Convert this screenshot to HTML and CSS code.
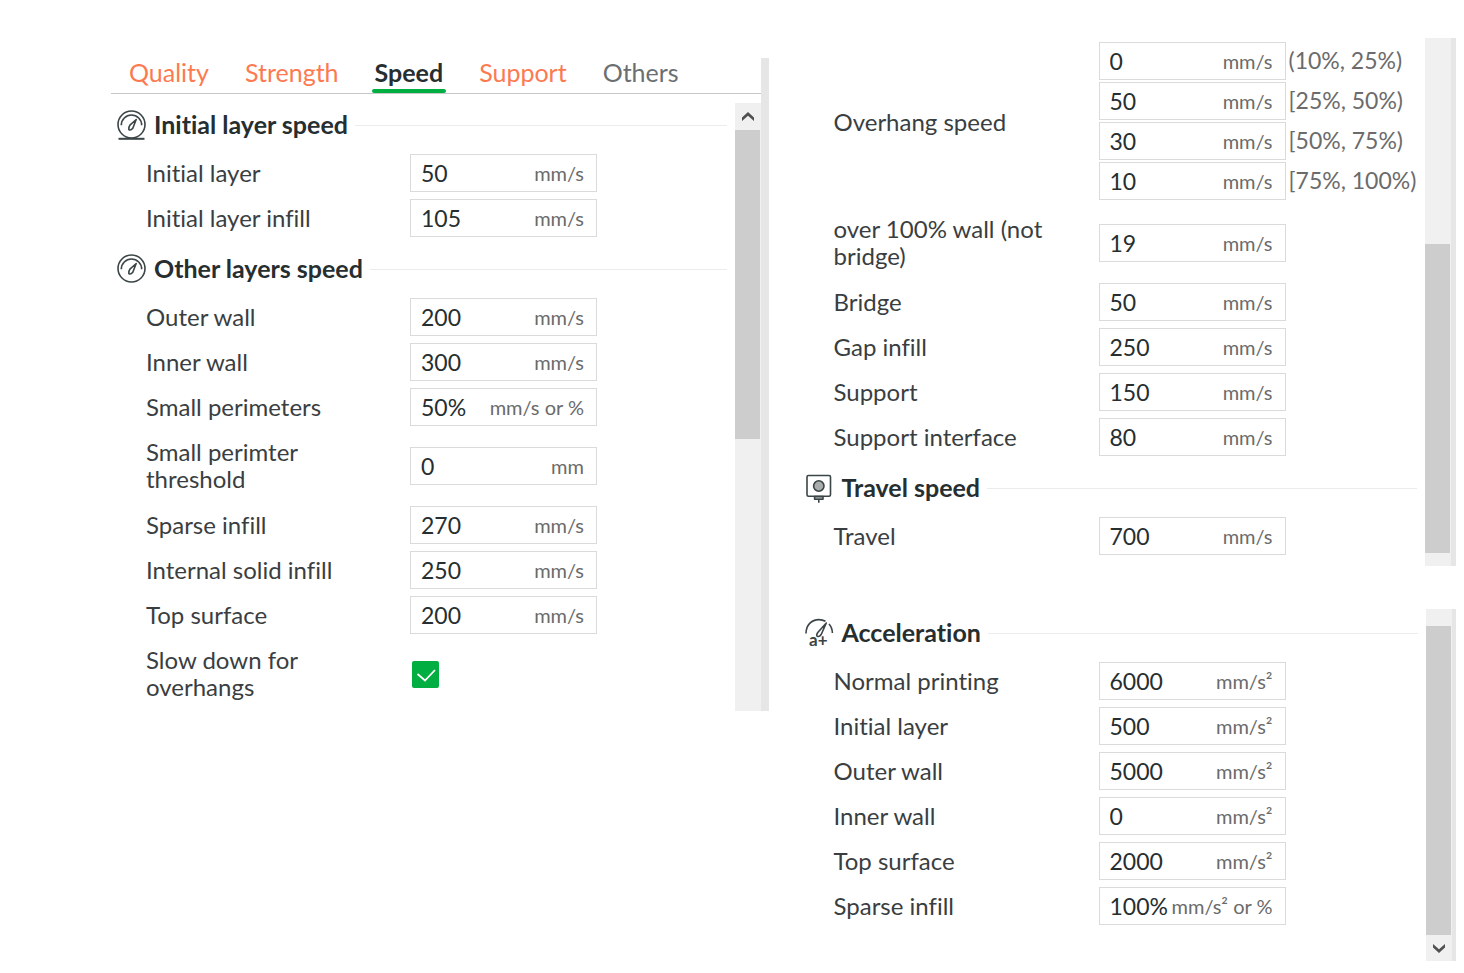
FILE: index.html
```html
<!DOCTYPE html>
<html lang="en">
<head>
<meta charset="utf-8">
<title>Speed settings</title>
<link rel="stylesheet" href="styles.css">
</head>
<body>
<svg class="defs" aria-hidden="true">
  <symbol id="dial" viewBox="0 0 30 30">
    <circle cx="14.500" cy="14.500" r="13.500"/>
    <path d="M4.300 15.200A10.200 10.200 0 0 1 24.700 15.200"/>
    <path d="M19.200 9.500L13.200 14.800Q11.200 17.500 11.800 19.600Q13.800 20.800 15.800 18.200Z"/>
  </symbol>
</svg>
<main class="page">
  <section class="panel panel-first">
    <nav class="tabs">
      <button class="tab changed" type="button">Quality</button>
      <button class="tab changed" type="button">Strength</button>
      <button class="tab active" type="button">Speed</button>
      <button class="tab changed" type="button">Support</button>
      <button class="tab" type="button">Others</button>
    </nav>
    <div class="body">
      <div class="content">
        <h2 class="heading">
          <svg class="icon" viewBox="0 0 30 30" aria-hidden="true"><use href="#dial"/><path d="M1.500 28.800H27.500" class="thick"/></svg>
          <span>Initial layer speed</span>
        </h2>
        <div class="rows">
          <div class="row"><label for="a1">Initial layer</label><div class="field"><input id="a1" value="50"><span>mm/s</span></div></div>
          <div class="row"><label for="a2">Initial layer infill</label><div class="field"><input id="a2" value="105"><span>mm/s</span></div></div>
        </div>
        <h2 class="heading">
          <svg class="icon" viewBox="0 0 30 30" aria-hidden="true"><use href="#dial"/></svg>
          <span>Other layers speed</span>
        </h2>
        <div class="rows">
          <div class="row"><label for="b1">Outer wall</label><div class="field"><input id="b1" value="200"><span>mm/s</span></div></div>
          <div class="row"><label for="b2">Inner wall</label><div class="field"><input id="b2" value="300"><span>mm/s</span></div></div>
          <div class="row"><label for="b3">Small perimeters</label><div class="field"><input id="b3" value="50%"><span>mm/s or %</span></div></div>
          <div class="row tall"><label for="b4">Small perimter threshold</label><div class="field"><input id="b4" value="0"><span>mm</span></div></div>
          <div class="row"><label for="b5">Sparse infill</label><div class="field"><input id="b5" value="270"><span>mm/s</span></div></div>
          <div class="row"><label for="b6">Internal solid infill</label><div class="field"><input id="b6" value="250"><span>mm/s</span></div></div>
          <div class="row"><label for="b7">Top surface</label><div class="field"><input id="b7" value="200"><span>mm/s</span></div></div>
          <div class="row tall"><label for="b8">Slow down for overhangs</label>
            <div class="check"><input id="b8" type="checkbox" checked><svg viewBox="0 0 27 27" aria-hidden="true"><path d="M5.500 13L13 19.500L23 9"/></svg></div></div>
        </div>
      </div>
      <div class="scroll">
        <button class="arrow" type="button" aria-label="Scroll up"><svg viewBox="0 0 12 9" aria-hidden="true"><path d="M0 9V5.500L6 0L12 5.500V9L6 3.800Z"/></svg></button>
        <div class="thumb"></div>
      </div>
    </div>
  </section>

  <div class="stack">
    <section class="panel panel-second">
      <div class="body">
        <div class="content">
          <div class="rows">
            <div class="row">
              <label for="c1">Overhang speed</label>
              <div class="group">
                <div class="line"><div class="field"><input id="c1" value="0"><span>mm/s</span></div><label class="note" for="c1">(10%, 25%)</label></div>
                <div class="line"><div class="field"><input id="c2" value="50"><span>mm/s</span></div><label class="note" for="c2">[25%, 50%)</label></div>
                <div class="line"><div class="field"><input id="c3" value="30"><span>mm/s</span></div><label class="note" for="c3">[50%, 75%)</label></div>
                <div class="line"><div class="field"><input id="c4" value="10"><span>mm/s</span></div><label class="note" for="c4">[75%, 100%)</label></div>
              </div>
            </div>
            <div class="row tall"><label for="c5">over 100% wall (not bridge)</label><div class="field"><input id="c5" value="19"><span>mm/s</span></div></div>
            <div class="row"><label for="c6">Bridge</label><div class="field"><input id="c6" value="50"><span>mm/s</span></div></div>
            <div class="row"><label for="c7">Gap infill</label><div class="field"><input id="c7" value="250"><span>mm/s</span></div></div>
            <div class="row"><label for="c8">Support</label><div class="field"><input id="c8" value="150"><span>mm/s</span></div></div>
            <div class="row"><label for="c9">Support interface</label><div class="field"><input id="c9" value="80"><span>mm/s</span></div></div>
          </div>
          <h2 class="heading">
            <svg class="icon" viewBox="0 0 30 30" aria-hidden="true"><rect x="2" y="2.500" width="23.500" height="20.800" rx="1.500"/><circle cx="13.800" cy="13" r="5.200" class="lens"/><path class="lens" d="M9.600 23.500H18V26.300H9.600Z"/><path d="M13.800 26.500V29.800"/></svg>
            <span>Travel speed</span>
          </h2>
          <div class="rows">
            <div class="row"><label for="d1">Travel</label><div class="field"><input id="d1" value="700"><span>mm/s</span></div></div>
          </div>
        </div>
        <div class="scroll low"><div class="thumb"></div></div>
      </div>
    </section>

    <section class="panel panel-third">
      <div class="body">
        <div class="content">
          <h2 class="heading">
            <svg class="icon" viewBox="0 0 30 30" aria-hidden="true"><path d="M1 15.500C1 7 6.500 1.600 14 1.600C16.500 1.600 18.500 2.200 20.500 3.300M24 6C26.300 8.500 27.300 11.500 27.400 15"/><path d="M21.300 5L13 14.300Q10.800 17.300 12.300 18.200Q14.300 19.300 16.200 16.500Z"/><text x="4" y="28">a+</text></svg>
            <span>Acceleration</span>
          </h2>
          <div class="rows">
            <div class="row"><label for="e1">Normal printing</label><div class="field"><input id="e1" value="6000"><span>mm/s²</span></div></div>
            <div class="row"><label for="e2">Initial layer</label><div class="field"><input id="e2" value="500"><span>mm/s²</span></div></div>
            <div class="row"><label for="e3">Outer wall</label><div class="field"><input id="e3" value="5000"><span>mm/s²</span></div></div>
            <div class="row"><label for="e4">Inner wall</label><div class="field"><input id="e4" value="0"><span>mm/s²</span></div></div>
            <div class="row"><label for="e5">Top surface</label><div class="field"><input id="e5" value="2000"><span>mm/s²</span></div></div>
            <div class="row"><label for="e6">Sparse infill</label><div class="field"><input id="e6" value="100%"><span>mm/s² or %</span></div></div>
          </div>
        </div>
        <div class="scroll end">
          <div class="thumb"></div>
          <button class="arrow" type="button" aria-label="Scroll down"><svg viewBox="0 0 12 9" aria-hidden="true"><path d="M0 0V3.500L6 9L12 3.500V0L6 5.200Z"/></svg></button>
        </div>
      </div>
    </section>
  </div>
</main>
</body>
</html>
```
FILE: styles.css
```css
* { box-sizing: border-box; }
body {
  margin: 0;
  background: #fff;
  color: #3a3e41;
  font: 24px/27px Lato, "Open Sans", sans-serif;
  font-variant-ligatures: none;
}
button, input { font: inherit; color: inherit; border: 0; padding: 0; background: none; }
.defs { display: block; width: 0; height: 0; }

.page {
  display: grid;
  grid-template-columns: 1fr 1fr;
  gap: 30px;
  align-items: start;
  padding: 38px 8px 12px 111px;
}
.stack { display: grid; gap: 43px; }
.panel { border-right: 5px solid #e6e6e6; }
.panel-first { border-right-width: 8px; margin-top: 20px; }
.panel-third { border-right-width: 4px; }

.tabs {
  display: flex;
  gap: 30px;
  height: 36px;
  padding-left: 15px;
  border-bottom: 1px solid #c8c8c8;
  font-size: 25px;
}
.tab { position: relative; height: 35px; padding: 0 3px 6px; color: #6b6f72; }
.tab.changed { color: #fd7a50; }
.tab.active { color: #262e30; font-weight: 700; }
.tab.active::after {
  content: "";
  position: absolute;
  inset: auto 0 0;
  height: 4px;
  border-radius: 2px;
  background: #00ae42;
}

.body { display: flex; }
.content { flex: 1; min-width: 0; padding-right: 8px; }
.panel-first .body { padding-top: 9px; }
.panel-first .content { padding-top: 7px; }
.panel-second .content { padding-top: 4px; }
.panel-third .content { padding-top: 9px; }

.heading {
  display: flex;
  align-items: center;
  gap: 7px;
  height: 30px;
  margin: 0 0 14px;
  padding-left: 6px;
  color: #262e30;
  font-size: 25px;
  font-weight: 700;
}
.heading span { padding-bottom: 2px; }
.heading::after { content: ""; flex: 1; height: 1px; background: #ececec; }
.icon { width: 30px; height: 30px; overflow: visible; fill: none; stroke: #3b4446; stroke-width: 1.6; stroke-linejoin: round; }
.icon .thick { stroke-width: 2; }
.icon .lens { fill: #a9adae; }
.icon text { fill: #3b4446; stroke: none; font: 700 17px Lato, sans-serif; }

.rows { display: grid; gap: 7px; padding-left: 35px; }
.rows + .heading { margin-top: 17px; }
.row { display: grid; grid-template-columns: 230px 1fr; column-gap: 34px; align-items: center; min-height: 38px; }
.stack .row { column-gap: 35px; }
.row.tall { min-height: 66px; }
.row label { padding-bottom: 2px; }
.field {
  display: flex;
  align-items: center;
  width: 187px;
  height: 38px;
  padding: 0 12px 0 10px;
  border: 1px solid #dbdbdb;
}
.field input { flex: 1; width: 0; min-width: 0; height: 36px; font-size: 23px; color: #262e30; outline: 0; }
.field span { font-size: 20px; color: #6b6b6b; white-space: nowrap; }
.group { display: grid; gap: 2px; padding-bottom: 3px; }
.line { display: flex; align-items: center; gap: 3px; }
.note { font-size: 23px; color: #6b6b6b; white-space: nowrap; }

.check { position: relative; width: 27px; height: 27px; margin-left: 2px; }
.check input { appearance: none; display: block; width: 27px; height: 27px; margin: 0; border-radius: 2px; background: #00ae42; }
.check svg { position: absolute; inset: 0; fill: none; stroke: #fff; stroke-width: 1.8; pointer-events: none; }

.scroll { display: flex; flex-direction: column; width: 26px; background: #f0f0f0; }
.panel-first .scroll { height: 608px; }
.panel-second .scroll { height: 528px; }
.panel-third .scroll { height: 352px; }
.arrow { display: grid; place-items: center; height: 27px; }
.arrow svg { width: 12px; height: 9px; fill: #505050; }
.thumb { width: 25px; height: 309px; background: #cdcdcd; }
.low { justify-content: flex-end; padding-bottom: 13px; }
.end { justify-content: flex-end; }
.end .arrow { height: 26px; }
```
